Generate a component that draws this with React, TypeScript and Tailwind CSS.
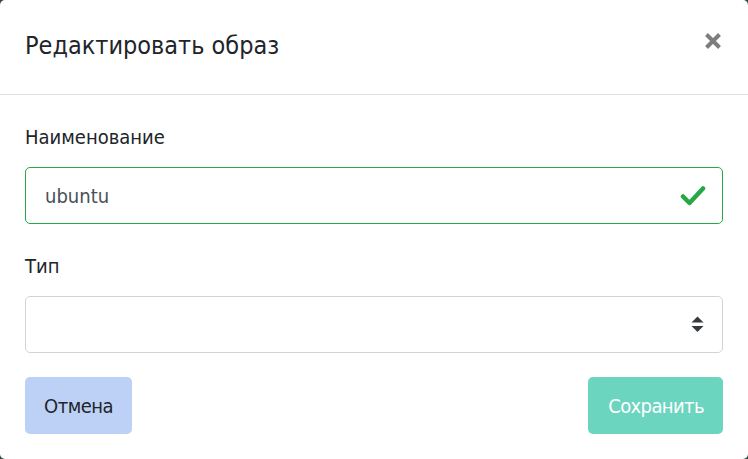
export default function App() {
  const font = { fontFamily: '"Liberation Sans Narrow", "DejaVu Sans Condensed", "Liberation Sans", sans-serif' };
  return (
    <div className="w-[748px] h-[459px] bg-[#2f4a40]" style={font}>
      <div className="w-full h-full bg-white rounded-[5px] flex flex-col overflow-hidden">
        <div className="h-[95px] shrink-0 border-b border-[#dee2e6] flex items-center justify-between px-[25px]">
          <h5 className="text-[25px] leading-[30px] text-[#212529] -mt-[3px]">Редактировать образ</h5>
          <button type="button" aria-label="Закрыть" className="w-[18px] h-[18px] flex items-center justify-center -mt-[12px] mr-[1px]">
            <svg width="18" height="18" viewBox="0 0 18 18">
              <path d="M2.5 2.5 L15.5 15.5 M15.5 2.5 L2.5 15.5" stroke="#7d7d7d" strokeWidth="4" />
            </svg>
          </button>
        </div>

        <div className="flex flex-col px-[25px] pt-[27px] pb-[25px]">
          <label className="text-[20px] leading-[30px] h-[30px] text-[#212529]">Наименование</label>
          <div className="mt-[15px] h-[57px] border border-[#28a745] rounded-[5px] flex items-center justify-between pl-[19px] pr-[16px]">
            <span className="text-[20px] text-[#495057]">ubuntu</span>
            <svg width="26" height="22" viewBox="0 0 26 22">
              <path d="M3 11.5 L9.5 18 L23 3.5" fill="none" stroke="#28a745" strokeWidth="4.5" strokeLinecap="round" strokeLinejoin="round" />
            </svg>
          </div>

          <label className="mt-[27px] text-[20px] leading-[30px] h-[30px] text-[#212529]">Тип</label>
          <div className="mt-[15px] h-[57px] border border-[#ced4da] rounded-[5px] flex items-center justify-end pr-[18px]">
            <svg width="13" height="17" viewBox="0 0 13 17">
              <path d="M6.5 0.5 L12.5 6.5 L0.5 6.5 Z" fill="#343a40" />
              <path d="M0.5 10 L12.5 10 L6.5 16 Z" fill="#343a40" />
            </svg>
          </div>

          <div className="mt-[24px] flex items-center justify-between">
            <button type="button" className="h-[57px] px-[19px] rounded-[5px] bg-[#bdd1f6] text-[20px] tracking-[-0.5px] text-[#212529]">
              Отмена
            </button>
            <button type="button" className="h-[57px] pl-[20px] pr-[19px] rounded-[5px] bg-[#6cd5c0] text-[20px] tracking-[-0.6px] text-white">
              Сохранить
            </button>
          </div>
        </div>
      </div>
    </div>
  );
}
